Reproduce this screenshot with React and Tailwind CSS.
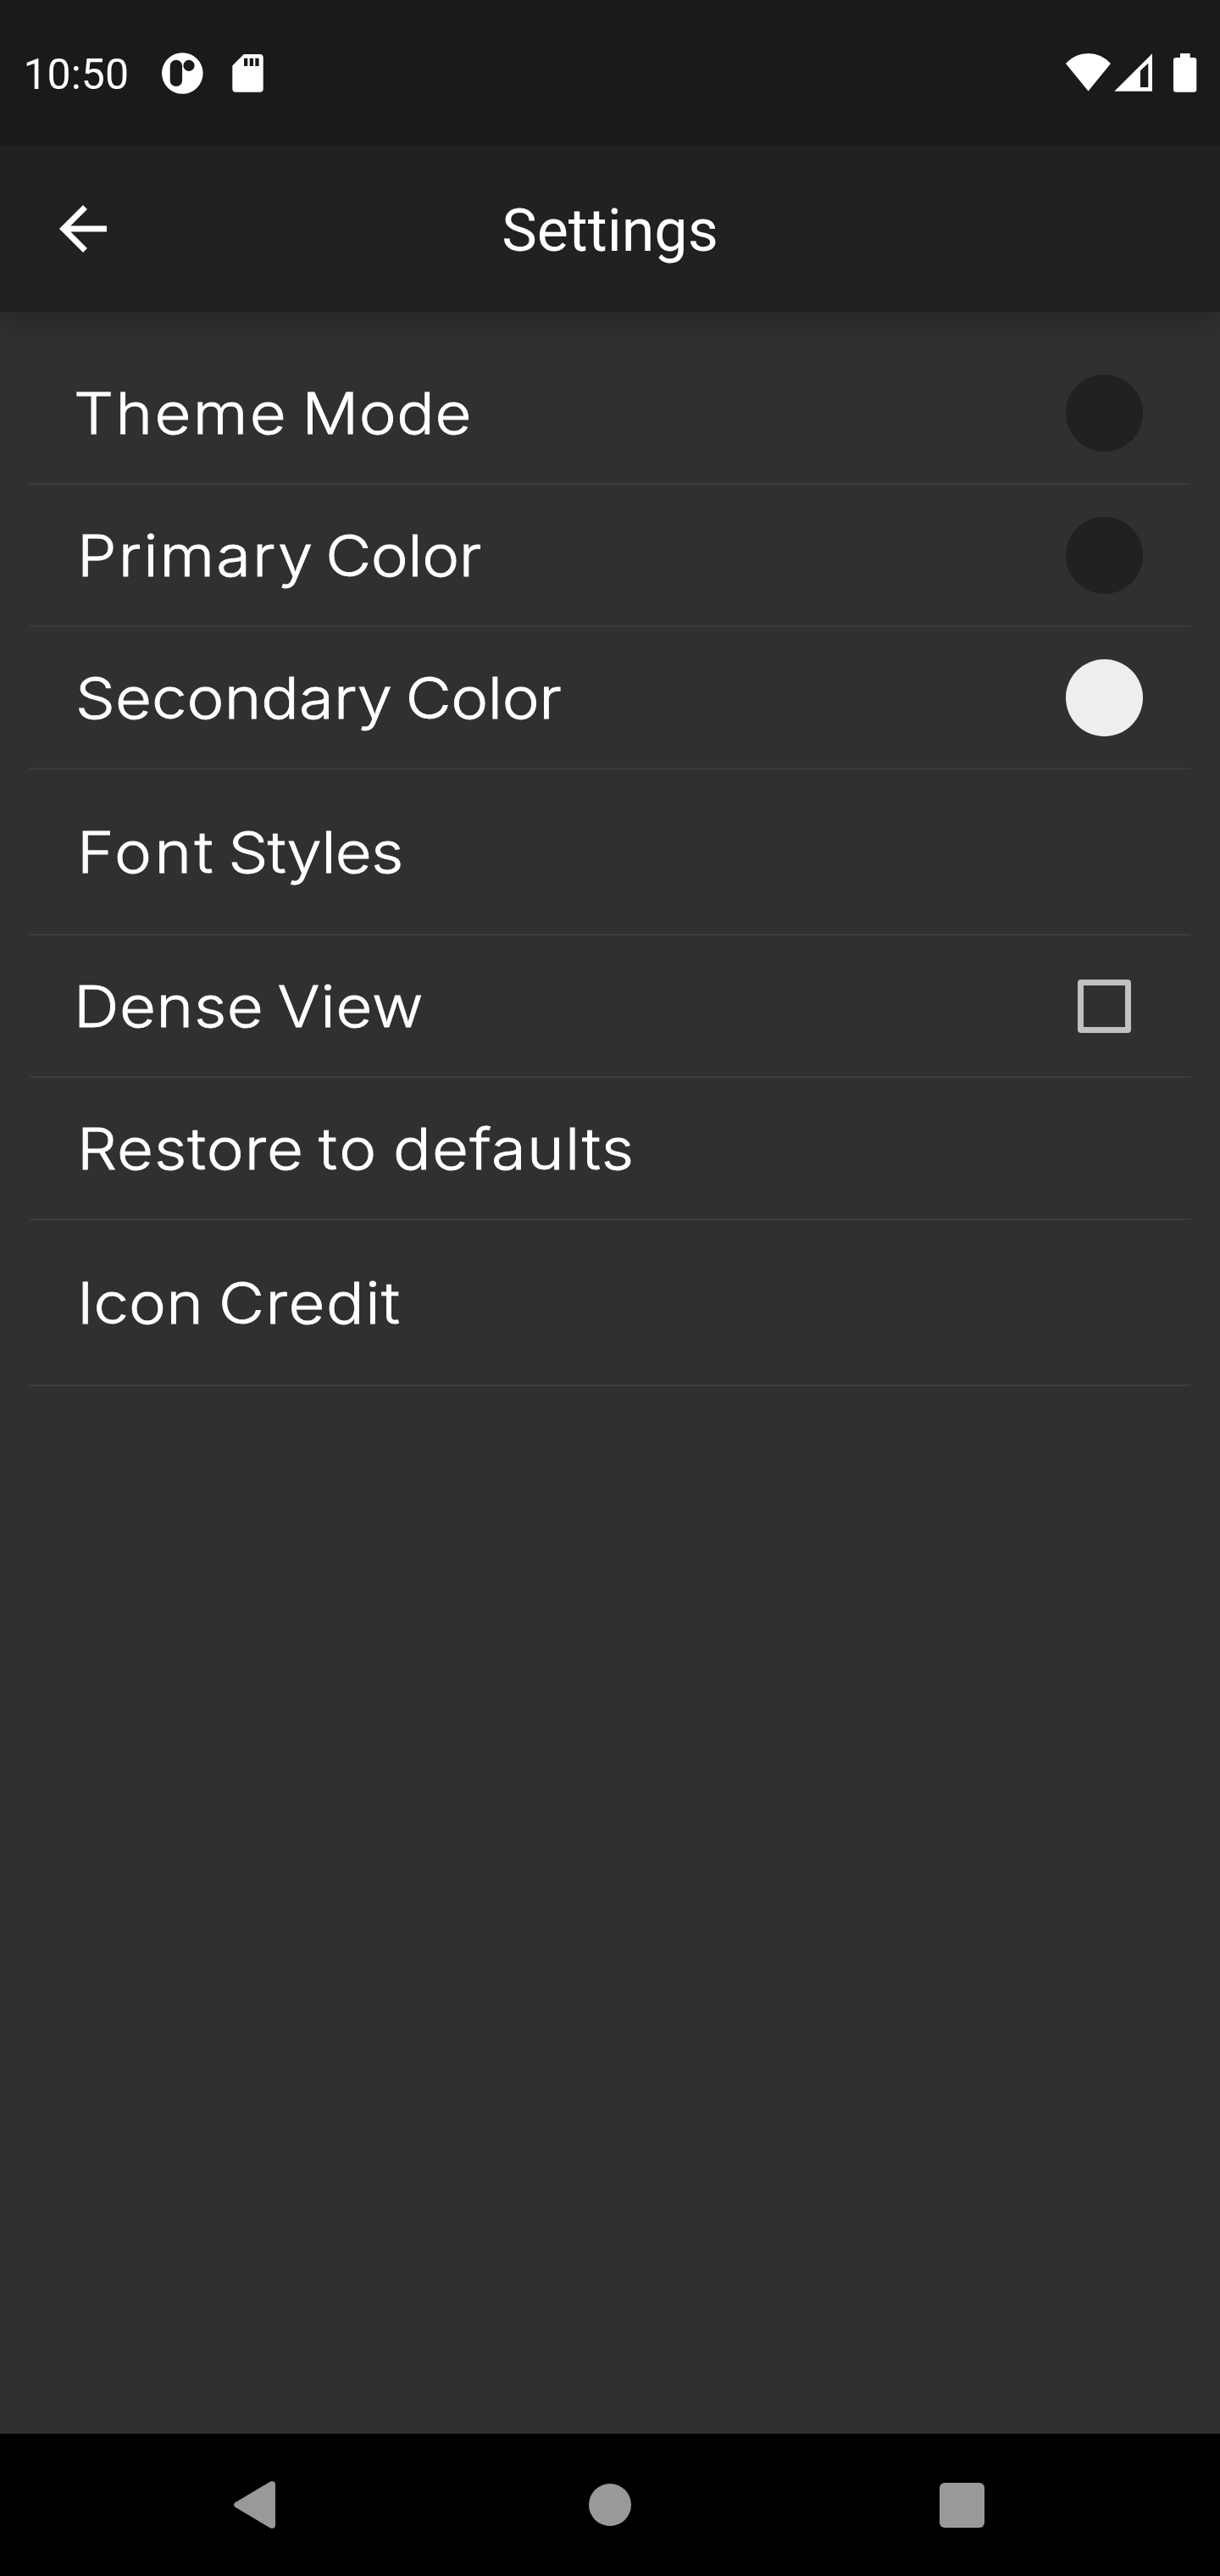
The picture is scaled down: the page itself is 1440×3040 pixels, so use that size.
import React from "react";

const rows = [
  {
    words: [["Theme", "tracking-[2.1px]"], ["Mode", "tracking-[0.5px]"]],
    label: "ml-[52.2px] [word-spacing:-3.9px]",
    height: "h-[168px]",
    dot: "bg-[#212121]",
  },
  {
    words: [["Primary", "tracking-[1.9px]"], ["Color", "tracking-[-0.4px]"]],
    label: "ml-[56.2px] [word-spacing:-7.2px]",
    height: "h-[168px]",
    dot: "bg-[#212121]",
  },
  {
    words: [["Secondary", "tracking-[0.1px]"], ["Color", "tracking-[-0.4px]"]],
    label: "ml-[54.4px] [word-spacing:-4.8px]",
    height: "h-[168px]",
    dot: "bg-[#eeeeee]",
  },
  {
    words: [["Font", "tracking-[3.1px]"], ["Styles", "tracking-[-0.7px]"]],
    label: "ml-[56px] [word-spacing:-5.7px]",
    height: "h-[196px]",
  },
  {
    words: [["Dense", "tracking-[0.6px]"], ["View", "tracking-[0.8px]"]],
    label: "ml-[52.2px] [word-spacing:-4.4px]",
    height: "h-[168px]",
    checkbox: true,
  },
  {
    words: [["Restore", "tracking-[0.9px]"], ["to", "tracking-[2.5px]"], ["defaults", "tracking-[1.2px]"]],
    label: "ml-[56px] [word-spacing:-3.5px]",
    height: "h-[168px]",
  },
  {
    words: [["Icon", "tracking-[0.1px]"], ["Credit", "tracking-[1.4px]"]],
    label: "ml-[56.2px] [word-spacing:-2.4px]",
    height: "h-[196px]",
  },
];

function StatusBar() {
  return (
    <div className="relative z-20 flex h-[172px] shrink-0 items-start bg-[#1a1a1a] text-white">
      <span className="mt-[58px] ml-[27.5px] w-[162.5px] text-[50px] leading-[60px]">10:50</span>
      <svg className="mt-[60px] h-[54px] w-[52px]" viewBox="190 60 52 54" fill="currentColor">
        <path
          fillRule="evenodd"
          d="M215.3 62.2a24.3 24.3 0 1 0 0 48.6a24.3 24.3 0 1 0 0-48.6zM207.9 70.7a7.2 7.2 0 0 1 7.2 7.2v17a7.2 7.2 0 0 1-14.4 0v-17a7.2 7.2 0 0 1 7.2-7.2zM223 70.8a6.6 6.6 0 1 1 0 13.2a6.6 6.6 0 1 1 0-13.2z"
        />
      </svg>
      <svg className="mt-[60px] ml-[30px] h-[54px] w-[42px]" viewBox="272 60 42 54" fill="currentColor">
        <path
          fillRule="evenodd"
          d="M287.8 64h18.9a4 4 0 0 1 4 4v36.7a4 4 0 0 1-4 4h-28.4a4 4 0 0 1-4-4V77.6zM288 68.7v9.3h4.3v-9.3zM294.7 68.7v9.3h4.3v-9.3zM301.3 68.7v9.3h4.3v-9.3z"
        />
      </svg>
      <svg className="mt-[60px] mr-[24px] ml-auto h-[54px] w-[160px]" viewBox="1256 60 160 54" fill="currentColor">
        <path d="M1258 75q11-12 26.5-12t26.5 12l-26.5 32.5z" />
        <path fillRule="evenodd" d="M1360 63.3v44.5h-44.7zM1355.3 74.7l-9.3 8.6v19.7h9.3z" />
        <path d="M1393 63h11.7v5h4.6a3 3 0 0 1 3 3v34.8a3 3 0 0 1-3 3H1388a3 3 0 0 1-3-3V71a3 3 0 0 1 3-3h5z" />
      </svg>
    </div>
  );
}

function Header() {
  return (
    <header className="relative z-10 grid h-[196px] shrink-0 grid-cols-[1fr_auto_1fr] items-center bg-[#212121] text-white shadow-[0_8px_32px_rgba(0,0,0,0.24)]">
      <svg className="ml-[56px] size-[84px]" viewBox="0 0 24 24" fill="currentColor">
        <path d="M20 11H7.83l5.59-5.59L12 4l-8 8 8 8 1.41-1.41L7.83 13H20v-2z" />
      </svg>
      <h1 className="pt-1 text-[70px] leading-[82px] font-normal">Settings</h1>
    </header>
  );
}

function Row({ words, label, height, dot, checkbox }) {
  return (
    <li className={`flex items-center justify-between border-b-2 border-[#3c3c3c] ${height}`}>
      <span
        className={`origin-left scale-x-[1.1] pt-[2px] font-['Inter',sans-serif] text-[67.4px] leading-[82px] font-light whitespace-nowrap text-white [-webkit-text-stroke:0.8px_white] ${label}`}
      >
        {words.map(([word, tracking], i) => (
          <React.Fragment key={word}>
            {i > 0 && " "}
            <span className={tracking}>{word}</span>
          </React.Fragment>
        ))}
      </span>
      {dot && <span className={`mr-[56px] size-[91px] rounded-full ${dot}`} />}
      {checkbox && <span className="mr-[70px] size-[63px] rounded-[4px] border-7 border-[#c1c1c1]" />}
    </li>
  );
}

function NavBar() {
  return (
    <nav className="flex h-[168px] shrink-0 items-center bg-black text-[#999999]">
      <svg className="ml-[276px] h-[56px] w-[49px]" viewBox="0 0 49 56" fill="currentColor">
        <path d="M1.6 25.2 43.2.6Q49-1.2 49 4.5V51.5Q49 57.200 43.200 55.400L1.600 30.800Q-1.600 28 1.600 25.200z" />
      </svg>
      <span className="ml-[370px] size-[50px] rounded-full bg-[#999999]" />
      <span className="ml-[363.5px] size-[53px] rounded-[6px] bg-[#999999]" />
    </nav>
  );
}

export default function App() {
  return (
    <div className="flex h-[3040px] w-[1440px] flex-col overflow-hidden bg-[#303030] font-['Roboto',sans-serif]">
      <StatusBar />
      <Header />
      <ul className="flex-1 px-[35px] pt-[36px]">
        {rows.map((row) => (
          <Row key={row.words[0][0]} {...row} />
        ))}
      </ul>
      <NavBar />
    </div>
  );
}
